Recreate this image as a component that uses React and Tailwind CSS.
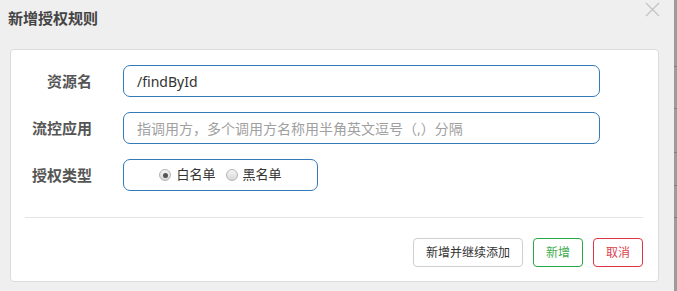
import React from 'react'

const font = { fontFamily: '"Noto Sans", "Noto Sans CJK SC", sans-serif' }

function Radio({ checked, label }) {
  return (
    <label className="flex items-center gap-[5px] text-[13px] text-[#333]">
      <span className="w-[12px] h-[12px] rounded-full border border-[#b5b5b5] bg-gradient-to-b from-[#f4f4f4] to-[#d8d8d8] flex items-center justify-center">
        {checked && <span className="w-[5px] h-[5px] rounded-full bg-[#555]" />}
      </span>
      <span>{label}</span>
    </label>
  )
}

function Row({ label, children }) {
  return (
    <div className="flex items-center">
      <div className="w-[81px] text-right text-[15px] font-bold text-[#555]">{label}</div>
      <div className="ml-[31px]">{children}</div>
    </div>
  )
}

export default function App() {
  return (
    <div className="w-[677px] h-[291px] bg-[#efefef] flex overflow-hidden" style={font}>
      <div className="flex-1 flex flex-col">
        {/* header */}
        <div className="h-[49px] flex justify-between pl-[8px] pr-[14px]">
          <h3 className="mt-[8px] text-[15px] font-bold text-[#444] leading-[20px]">新增授权规则</h3>
          <svg width="15" height="15" viewBox="0 0 15 15" className="mt-[2px]">
            <path d="M1 1L14 14M14 1L1 14" stroke="#c4c4c4" strokeWidth="1.3" />
          </svg>
        </div>

        {/* card */}
        <div className="ml-[10px] w-[649px] h-[233px] bg-white border border-[#dcdcdc] rounded-[4px] pt-[15px] px-[14px]">
          <div className="flex flex-col gap-[15px] -ml-[14px]">
            <Row label="资源名">
              <div className="w-[477px] h-[32px] border border-[#337ab7] rounded-[7px] flex items-center px-[13px] text-[14px] text-[#333]">
                /findById
              </div>
            </Row>
            <Row label="流控应用">
              <div className="w-[477px] h-[32px] border border-[#337ab7] rounded-[7px] flex items-center px-[13px] text-[14px] text-[#a0a0a0]">
                指调用方，多个调用方名称用半角英文逗号（,）分隔
              </div>
            </Row>
            <Row label="授权类型">
              <div className="w-[195px] h-[32px] border border-[#337ab7] rounded-[7px] flex items-center justify-center gap-[10px]">
                <Radio checked label="白名单" />
                <Radio label="黑名单" />
              </div>
            </Row>
          </div>

          <div className="mt-[26px] mr-[1px] border-t border-[#e5e5e5]" />

          <div className="mt-[20px] mr-[1px] flex justify-end gap-[10px] text-[12px]">
            <button className="h-[29px] px-[12px] border border-[#cfcfcf] rounded-[4px] text-[#333] bg-white">新增并继续添加</button>
            <button className="h-[29px] px-[12px] border border-[#28a745] rounded-[4px] text-[#3fae4f] bg-white">新增</button>
            <button className="h-[29px] px-[12px] border border-[#dc3545] rounded-[4px] text-[#d9414f] bg-white">取消</button>
          </div>
        </div>
      </div>

      {/* page scrollbar strip */}
      <div className="w-[3px] bg-[#9c9c9c] flex flex-col">
        <div className="h-[66px]" />
        <div className="h-[1px] bg-[#808080]" />
        <div className="h-[41px]" />
        <div className="h-[1px] bg-[#808080]" />
        <div className="h-[43px]" />
        <div className="h-[1px] bg-[#808080]" />
        <div className="h-[32px]" />
        <div className="h-[1px] bg-[#808080]" />
        <div className="h-[31px]" />
        <div className="h-[1px] bg-[#808080]" />
      </div>
    </div>
  )
}
